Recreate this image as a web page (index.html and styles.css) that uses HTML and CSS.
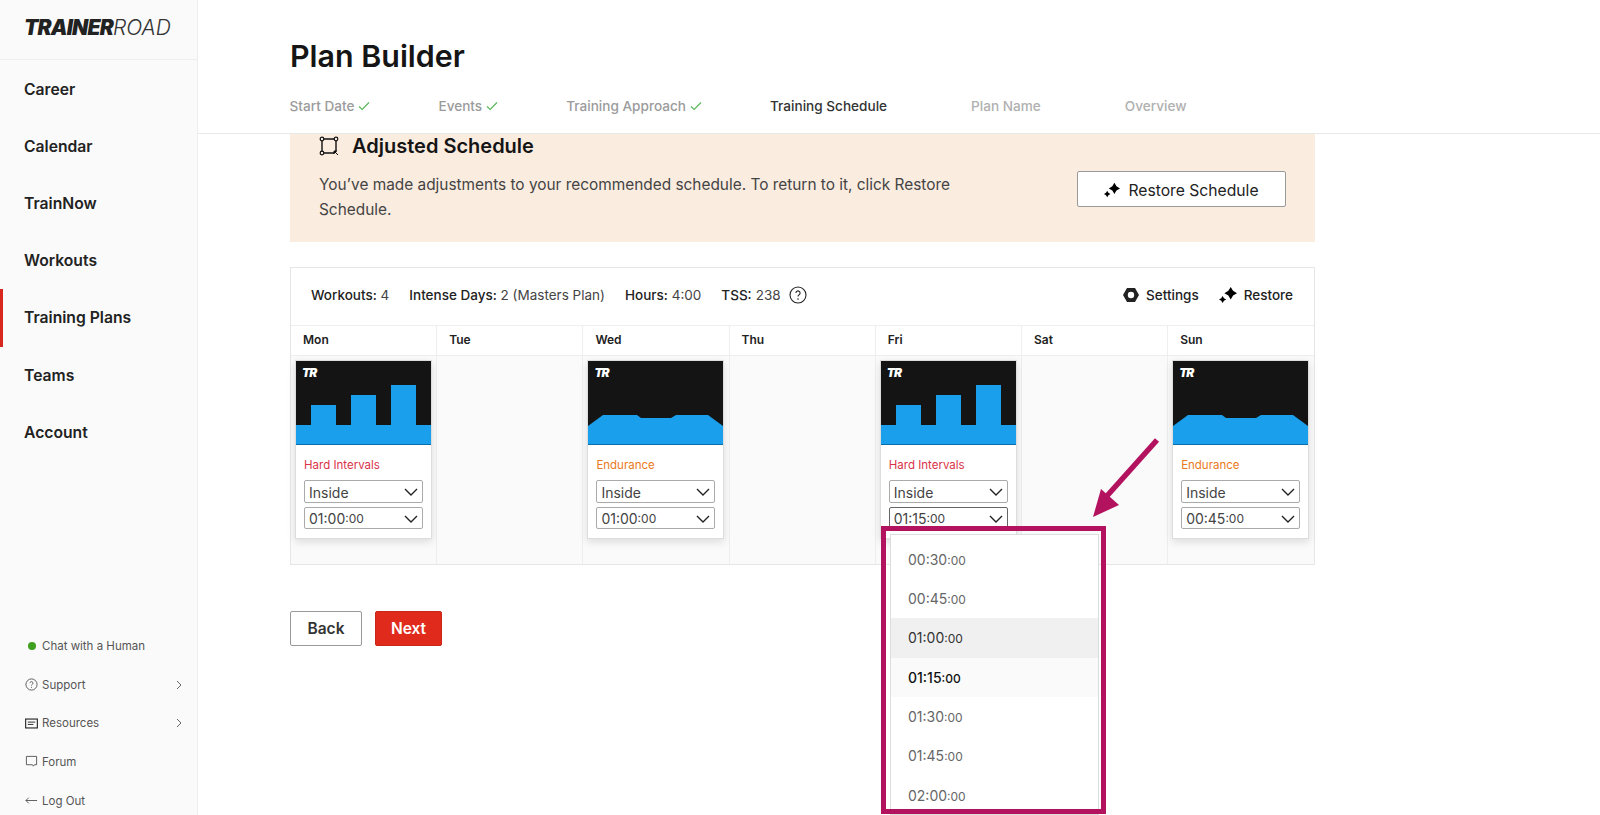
FILE: index.html
```html
<!DOCTYPE html>
<html lang="en">
<head>
    <meta charset="UTF-8">
    <title>Plan Builder</title>
    <link rel="stylesheet" href="styles.css">
</head>
<body>
    <svg class="icon-defs" width="0" height="0">
        <symbol id="sparkle" viewBox="0 0 20 20">
            <path d="M13 1l2.6 4.4L20 8l-4.4 2.6L13 15l-2.6-4.4L6 8l4.4-2.6z"/>
            <path d="M4 11l1.5 2.500L8 15l-2.500 1.500L4 19l-1.500-2.500L0 15l2.500-1.500z"/>
        </symbol>
        <symbol id="chevron" viewBox="0 0 14 8">
            <path d="M1 1l6 6 6-6" fill="none" stroke="#222" stroke-width="1.4"/>
        </symbol>
        <symbol id="check" viewBox="0 0 12 10">
            <path d="M1 5.500l3.200 3L11 1.500" fill="none" stroke="#5cb85c" stroke-width="1.2"/>
        </symbol>
        <symbol id="hard" viewBox="0 0 135 84" preserveAspectRatio="none">
            <rect width="135" height="84" fill="#141414"/>
            <path d="M0 64H15V44H40V64H55V34H80V64H95V24H120V64H135V84H0z" fill="#1a9fec"/>
            <rect y="83" width="135" height="1" fill="#0b6ea8"/>
        </symbol>
        <symbol id="endurance" viewBox="0 0 135 84" preserveAspectRatio="none">
            <rect width="135" height="84" fill="#141414"/>
            <path d="M0 65L15 54H49L53 57H83L88 54H120L135 65V84H0z" fill="#1a9fec"/>
            <rect y="83" width="135" height="1" fill="#0b6ea8"/>
        </symbol>
    </svg>

    <aside class="sidebar">
        <div class="logo"><b>TRAINER</b>ROAD</div>
        <nav class="nav">
            <a>Career</a>
            <a>Calendar</a>
            <a>TrainNow</a>
            <a>Workouts</a>
            <a class="active">Training Plans</a>
            <a>Teams</a>
            <a>Account</a>
        </nav>
        <div class="side-links">
            <a><span class="dot"></span>Chat with a Human</a>
            <a>
                <svg class="side-icon" viewBox="0 0 14 14"><circle cx="7" cy="7" r="6" fill="none" stroke="#555"/><path d="M5.400 5.500a1.600 1.600 0 1 1 2.400 1.400c-.5.300-.8.600-.8 1.200" fill="none" stroke="#555"/><circle cx="7" cy="10" r=".6" fill="#555"/></svg>
                Support
                <svg class="side-arrow" viewBox="0 0 6 10"><path d="M1 1l4 4-4 4" fill="none" stroke="#666"/></svg>
            </a>
            <a>
                <svg class="side-icon" viewBox="0 0 14 14"><rect x=".7" y="2.200" width="12.600" height="9.600" fill="none" stroke="#222" stroke-width="1.2"/><path d="M3 5.500h8M3 8h6" stroke="#222"/></svg>
                Resources
                <svg class="side-arrow" viewBox="0 0 6 10"><path d="M1 1l4 4-4 4" fill="none" stroke="#666"/></svg>
            </a>
            <a>
                <svg class="side-icon" viewBox="0 0 14 14"><path d="M1.500 1.500h11v9H10l-1 1.500-1-1.500H1.500z" fill="none" stroke="#555"/></svg>
                Forum
            </a>
            <a>
                <svg class="side-icon" viewBox="0 0 14 14"><path d="M13 7H1M4 4L1 7l3 3" fill="none" stroke="#555"/></svg>
                Log Out
            </a>
        </div>
    </aside>

    <main class="main">
        <header class="page-head">
            <h1>Plan Builder</h1>
            <div class="steps">
                <div class="step done">Start Date<svg class="tick"><use href="#check"/></svg></div>
                <div class="step done">Events<svg class="tick"><use href="#check"/></svg></div>
                <div class="step done">Training Approach<svg class="tick"><use href="#check"/></svg></div>
                <div class="step current">Training Schedule<span class="tick"></span></div>
                <div class="step todo">Plan Name<span class="tick"></span></div>
                <div class="step todo">Overview<span class="tick"></span></div>
            </div>
        </header>

        <div class="content">
            <section class="banner">
                <div class="banner-text">
                    <h2>
                        <svg class="banner-icon" viewBox="0 0 20 20"><path d="M3 3h14v12l-2 2H3z" fill="none" stroke="#111" stroke-width="1.4"/><circle cx="3" cy="3" r="1.800" fill="#fbece0" stroke="#111" stroke-width="1.2"/><circle cx="17" cy="3" r="1.800" fill="#fbece0" stroke="#111" stroke-width="1.2"/><circle cx="3" cy="17" r="1.800" fill="#fbece0" stroke="#111" stroke-width="1.2"/><path d="M15 15l4 4M15 15h3M15 15v3" fill="none" stroke="#111"/></svg>
                        Adjusted Schedule
                    </h2>
                    <p>You’ve made adjustments to your recommended schedule. To return to it, click Restore Schedule.</p>
                </div>
                <button class="restore-btn"><svg class="spark-lg"><use href="#sparkle"/></svg>Restore Schedule</button>
            </section>

            <section class="schedule">
                <div class="summary">
                    <span><b>Workouts:</b> 4</span>
                    <span><b>Intense Days:</b> 2 (Masters Plan)</span>
                    <span><b>Hours:</b> 4:00</span>
                    <span class="tss"><b>TSS:</b> 238
                        <svg class="help" viewBox="0 0 18 18"><circle cx="9" cy="9" r="8" fill="none" stroke="#222" stroke-width="1.100"/><path d="M6.900 7a2.100 2.100 0 1 1 3.200 1.800c-.7.400-1.100.8-1.100 1.700" fill="none" stroke="#222" stroke-width="1.100"/><circle cx="9" cy="13" r=".8" fill="#222"/></svg>
                    </span>
                    <div class="summary-actions">
                        <a><svg class="nut" viewBox="0 0 16 16"><path fill-rule="evenodd" d="M4 1h8l4 7-4 7H4L0 8zM8 4.800a3.200 3.200 0 1 0 0 6.400 3.200 3.200 0 0 0 0-6.400z" fill="#222"/></svg>Settings</a>
                        <a><svg class="spark"><use href="#sparkle"/></svg>Restore</a>
                    </div>
                </div>

                <div class="days">
                    <div class="day-name">Mon</div>
                    <div class="day-name">Tue</div>
                    <div class="day-name">Wed</div>
                    <div class="day-name">Thu</div>
                    <div class="day-name">Fri</div>
                    <div class="day-name">Sat</div>
                    <div class="day-name">Sun</div>

                    <div class="day">
                        <div class="card">
                            <div class="thumb"><svg><use href="#hard"/></svg><i>TR</i></div>
                            <div class="card-body">
                                <div class="zone hard">Hard Intervals</div>
                                <div class="pick tall">Inside<svg><use href="#chevron"/></svg></div>
                                <div class="pick">01:00<small>:00</small><svg><use href="#chevron"/></svg></div>
                            </div>
                        </div>
                    </div>
                    <div class="day"></div>
                    <div class="day">
                        <div class="card">
                            <div class="thumb"><svg><use href="#endurance"/></svg><i>TR</i></div>
                            <div class="card-body">
                                <div class="zone easy">Endurance</div>
                                <div class="pick tall">Inside<svg><use href="#chevron"/></svg></div>
                                <div class="pick">01:00<small>:00</small><svg><use href="#chevron"/></svg></div>
                            </div>
                        </div>
                    </div>
                    <div class="day"></div>
                    <div class="day">
                        <div class="card">
                            <div class="thumb"><svg><use href="#hard"/></svg><i>TR</i></div>
                            <div class="card-body">
                                <div class="zone hard">Hard Intervals</div>
                                <div class="pick tall">Inside<svg><use href="#chevron"/></svg></div>
                                <div class="pick open">01:15<small>:00</small><svg><use href="#chevron"/></svg></div>
                            </div>
                        </div>
                    </div>
                    <div class="day"></div>
                    <div class="day">
                        <div class="card">
                            <div class="thumb"><svg><use href="#endurance"/></svg><i>TR</i></div>
                            <div class="card-body">
                                <div class="zone easy">Endurance</div>
                                <div class="pick tall">Inside<svg><use href="#chevron"/></svg></div>
                                <div class="pick">00:45<small>:00</small><svg><use href="#chevron"/></svg></div>
                            </div>
                        </div>
                    </div>
                </div>
            </section>

            <div class="actions">
                <button class="back">Back</button>
                <button class="next">Next</button>
            </div>
        </div>
    </main>

    <!-- dropdown that is open over the schedule -->
    <div class="menu">
        <div class="opt">00:30<small>:00</small></div>
        <div class="opt">00:45<small>:00</small></div>
        <div class="opt hover">01:00<small>:00</small></div>
        <div class="opt selected">01:15<small>:00</small></div>
        <div class="opt">01:30<small>:00</small></div>
        <div class="opt">01:45<small>:00</small></div>
        <div class="opt">02:00<small>:00</small></div>
    </div>

    <!-- annotation drawn on top of the screenshot -->
    <div class="callout"></div>
    <svg class="pointer" viewBox="0 0 70 84"><path d="M65 3L14 60" stroke="#b3125f" stroke-width="5.500" fill="none"/><path d="M1 80L9 52L27 68z" fill="#b3125f"/></svg>
</body>
</html>
```

FILE: styles.css
```css
* {
    box-sizing: border-box;
}

html, body {
    height: 100%;
}

body {
    font-family: Inter, "Open Sans", sans-serif;
    display: flex;
    height: 815px;
    margin: 0;
    background: #ffffff;
    color: #222;
    overflow: hidden;
}

.icon-defs {
    position: absolute;
}

/* sidebar */
.sidebar {
    display: flex;
    flex-direction: column;
    flex: none;
    width: 198px;
    background: #fafafa;
    border-right: 1px solid #eeeeee;
}

.logo {
    height: 60px;
    padding: 15px 0 0 24px;
    border-bottom: 1px solid #eeeeee;
    font-size: 21px;
    font-style: italic;
    font-weight: 300;
    letter-spacing: 0;
    color: #333;
    white-space: nowrap;
}

.logo b {
    font-weight: 900;
    letter-spacing: -0.8px;
    color: #222;
}

.nav {
    display: flex;
    flex-direction: column;
    padding-top: 0.6px;
}

.nav a {
    height: 57.2px;
    padding-left: 24px;
    line-height: 57px;
    font-size: 15.7px;
    font-weight: 600;
    color: #222;
}

.nav a.active {
    padding-left: 21px;
    border-left: 3px solid #d8281e;
}

.side-links {
    display: flex;
    flex-direction: column;
    margin-top: auto;
    margin-bottom: -5px;
    padding: 0 0 0 25px;
}

.side-links a {
    display: flex;
    align-items: center;
    height: 38.7px;
    font-size: 11.5px;
    color: #555;
}

.side-icon {
    width: 13px;
    height: 13px;
    margin-right: 4px;
}

.side-arrow {
    width: 6px;
    height: 10px;
    margin-left: auto;
    margin-right: 15px;
}

.dot {
    width: 8px;
    height: 8px;
    margin: 0 6px 0 3px;
    border-radius: 50%;
    background: #3f9f1f;
}

/* main column */
.main {
    flex: 1;
    min-width: 0;
}

.page-head {
    height: 134px;
    padding: 36px 0 0 92px;
    border-bottom: 1px solid #e8e8e8;
}

.page-head h1 {
    margin: 0;
    font-size: 30.4px;
    font-weight: 600;
    line-height: 40px;
    color: #151515;
}

.steps {
    display: flex;
    gap: 68px;
    margin-top: 20px;
    margin-left: -0.5px;
}

.step {
    display: flex;
    align-items: center;
    font-size: 13.6px;
    font-weight: 500;
    line-height: 20px;
}

.step.done {
    color: #9b9b9b;
}

.step.current {
    color: #333;
}

.step.todo {
    color: #b0b0b0;
}

.tick {
    width: 12px;
    height: 10px;
    margin-left: 4px;
}

.content {
    width: 1025px;
    margin-left: 92px;
}

/* adjusted schedule banner */
.banner {
    display: flex;
    align-items: flex-start;
    justify-content: space-between;
    height: 108px;
    padding: 0 29px;
    background: #fbece0;
}

.banner-text {
    width: 660px;
}

.banner h2 {
    display: flex;
    align-items: center;
    gap: 13px;
    height: 24px;
    margin: 0;
    font-size: 20px;
    font-weight: 600;
    color: #151515;
}

.banner-icon {
    width: 20px;
    height: 20px;
}

.banner p {
    margin: 14px 0 0;
    font-size: 15.4px;
    line-height: 25px;
    color: #444;
}

.restore-btn {
    display: flex;
    align-items: center;
    justify-content: center;
    gap: 8px;
    width: 209px;
    height: 36px;
    margin-top: 37px;
    padding-top: 3px;
    background: #ffffff;
    border: 1px solid #999;
    border-radius: 2px;
    font: inherit;
    font-size: 15.7px;
    color: #222;
}

.spark-lg {
    width: 16px;
    height: 16px;
}

/* schedule table */
.schedule {
    margin-top: 25px;
    border: 1px solid #e6e6e6;
}

.summary {
    display: flex;
    align-items: center;
    height: 58px;
    padding: 0 21px 3px 20px;
    border-bottom: 1px solid #eeeeee;
    font-size: 13.5px;
    color: #444;
}

.summary > span {
    margin-right: 20px;
}

.summary b {
    font-weight: 500;
    color: #222;
}

.tss {
    display: flex;
    align-items: center;
    gap: 4px;
}

.help {
    width: 18px;
    height: 18px;
    margin-left: 4px;
}

.summary-actions {
    display: flex;
    gap: 20px;
    margin-left: auto;
    font-weight: 500;
    color: #222;
}

.summary-actions a {
    display: flex;
    align-items: center;
    gap: 7px;
}

.nut {
    width: 16px;
    height: 16px;
}

.spark {
    width: 18px;
    height: 18px;
}

.days {
    display: grid;
    grid-template-columns: repeat(6, 146.2px) 1fr;
    grid-template-rows: 30px 208px;
}

.day-name {
    padding: 6px 0 0 12px;
    border-right: 1px solid #eeeeee;
    border-bottom: 1px solid #eeeeee;
    font-size: 12px;
    font-weight: 600;
    color: #222;
}

.day-name:nth-child(7), .day:last-child {
    border-right: none;
}

.day {
    padding: 4px;
    background: #fafafa;
    border-right: 1px solid #eeeeee;
}

.card {
    width: 137px;
    height: 179px;
    background: #ffffff;
    border: 1px solid #dddddd;
    box-shadow: 0 3px 8px rgba(0, 0, 0, 0.12);
}

.thumb {
    position: relative;
    height: 84px;
}

.thumb svg {
    display: block;
    width: 100%;
    height: 84px;
}

.thumb i {
    position: absolute;
    top: 4px;
    left: 6px;
    font-size: 12px;
    font-weight: 900;
    letter-spacing: -1px;
    color: #ffffff;
}

.card-body {
    padding: 12px 8px 0;
}

.zone {
    height: 23px;
    font-size: 11.5px;
    line-height: 16px;
}

.zone.hard {
    color: #d9334a;
}

.zone.easy {
    color: #ea7a22;
}

.pick {
    display: flex;
    align-items: center;
    height: 22px;
    margin-bottom: 4px;
    padding: 1px 4px 0;
    background: #ffffff;
    border: 1px solid #aaaaaa;
    border-radius: 2px;
    font-size: 14px;
    color: #444;
}

.pick.tall {
    height: 23px;
}

.pick.open {
    border-color: #666;
}

.pick small, .opt small {
    font-size: 12px;
}

.pick svg {
    width: 14px;
    height: 8px;
    margin-left: auto;
}

.actions {
    display: flex;
    gap: 13px;
    margin-top: 46px;
}

.actions button {
    height: 35px;
    border-radius: 2px;
    font: inherit;
    font-size: 15.5px;
    font-weight: 600;
}

.back {
    width: 72px;
    background: #ffffff;
    border: 1px solid #999;
    color: #333;
}

.next {
    width: 67px;
    background: #df2a1c;
    border: 1px solid #c9261a;
    color: #ffffff;
}

/* open dropdown */
.menu {
    position: absolute;
    top: 534px;
    left: 890px;
    width: 209px;
    height: 281px;
    padding-top: 4.5px;
    background: #ffffff;
    border: 1px solid #dddddd;
    overflow: hidden;
}

.opt {
    height: 39.4px;
    padding-left: 17px;
    font-size: 14px;
    line-height: 39px;
    color: #666;
}

.opt.hover {
    background: #f0f0f0;
    color: #333;
}

.opt.selected {
    background: #fafafa;
    color: #111;
    font-weight: 500;
}

/* annotation */
.callout {
    position: absolute;
    top: 526px;
    left: 881px;
    width: 225px;
    height: 288px;
    border: 5px solid #b3125f;
}

.pointer {
    position: absolute;
    top: 437px;
    left: 1092px;
    width: 70px;
    height: 84px;
}
```
